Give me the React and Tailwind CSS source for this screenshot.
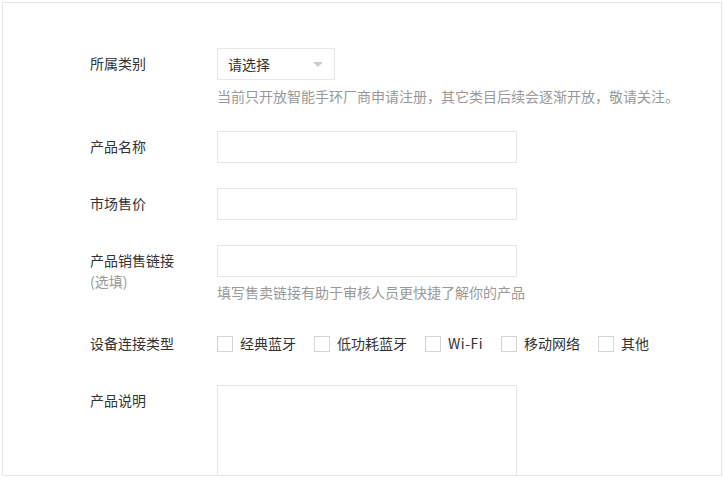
import React from "react";

const font = { fontFamily: '"Noto Sans CJK SC", "Noto Sans", sans-serif' };

const types = ["经典蓝牙", "低功耗蓝牙", "Wi-Fi", "移动网络", "其他"];

function Row({ label, sub, children, className = "" }) {
    return (
        <div className={"flex " + className}>
            <div className="w-[127px] shrink-0 pt-[5px] text-[14px] leading-[20px] text-[#333]">
                <div>{label}</div>
                {sub && <div className="mt-[1px] text-[#999]">{sub}</div>}
            </div>
            <div className="flex flex-col">{children}</div>
        </div>
    );
}

export default function App() {
    return (
        <div className="p-[2px] bg-white" style={font}>
            <div className="h-[474px] w-[720px] overflow-hidden border border-[#e6e6e6] bg-white pl-[87px] pt-[45px]">
                <Row label="所属类别">
                    <div className="flex h-[32px] w-[118px] items-center justify-between border border-[#e6e6e6] pl-[10px] pr-[11px] text-[14px] text-[#333]">
                        <span>请选择</span>
                        <span className="h-0 w-0 border-x-[5px] border-t-[5px] border-x-transparent border-t-[#ccc]"></span>
                    </div>
                    <p className="mt-[6px] text-[14px] leading-[20px] text-[#999]">
                        当前只开放智能手环厂商申请注册，其它类目后续会逐渐开放，敬请关注。
                    </p>
                </Row>

                <Row label="产品名称" className="mt-[25px]">
                    <input className="h-[32px] w-[300px] border border-[#e6e6e6] outline-none" />
                </Row>

                <Row label="市场售价" className="mt-[25px]">
                    <input className="h-[32px] w-[300px] border border-[#e6e6e6] outline-none" />
                </Row>

                <Row label="产品销售链接" sub="(选填)" className="mt-[25px]">
                    <input className="h-[32px] w-[300px] border border-[#e6e6e6] outline-none" />
                    <p className="mt-[5px] text-[14px] leading-[20px] text-[#999]">
                        填写售卖链接有助于审核人员更快捷了解你的产品
                    </p>
                </Row>

                <div className="mt-[32px] flex items-center">
                    <div className="w-[127px] shrink-0 text-[14px] leading-[20px] text-[#333] -translate-y-[1px]">设备连接类型</div>
                    <div className="flex items-center">
                        {types.map((t) => (
                            <label key={t} className="mr-[18px] flex items-center text-[14px] leading-[20px] text-[#333]">
                                <span className="mr-[7px] h-[16px] w-[16px] border border-[#d4d4d4] bg-white"></span>
                                <span className={"-translate-y-[1px] " + (t === "Wi-Fi" ? "tracking-[0.5px]" : "")}>{t}</span>
                            </label>
                        ))}
                    </div>
                </div>

                <Row label="产品说明" className="mt-[31px]">
                    <textarea className="h-[150px] w-[300px] resize-none border border-[#e6e6e6] outline-none"></textarea>
                </Row>
            </div>
        </div>
    );
}
